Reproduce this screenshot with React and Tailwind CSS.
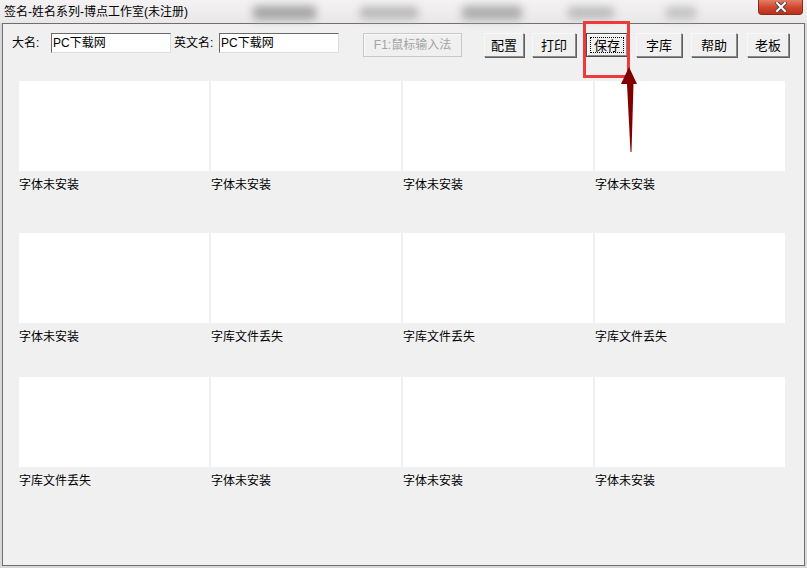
import React from "react";

const font = "font-['Liberation_Sans','Noto_Sans_CJK_SC',sans-serif]";

const rows = [
  { mt: "mt-[24px]", labels: ["字体未安装", "字体未安装", "字体未安装", "字体未安装"] },
  { mt: "mt-[40px]", labels: ["字体未安装", "字库文件丢失", "字库文件丢失", "字库文件丢失"] },
  { mt: "mt-[32px]", labels: ["字库文件丢失", "字体未安装", "字体未安装", "字体未安装"] },
];

function WinButton({ label, w, ml, focused }) {
  if (focused) {
    return (
      <div className={`${ml} ${w} h-[24px] border border-[#4a4a4a] p-0`}>
        <div className="w-full h-full border border-t-white border-l-white border-r-[#8a8a8a] border-b-[#8a8a8a] bg-[#f0f0f0] p-[2px]">
          <div className="w-full h-full border border-dotted border-black flex items-center justify-center text-[13px] leading-none text-black">
            {label}
          </div>
        </div>
      </div>
    );
  }
  return (
    <button
      className={`${ml} ${w} h-[24px] bg-[#f0f0f0] border border-t-[#f8f8f8] border-l-[#f8f8f8] border-r-[#8a8a8a] border-b-[#8a8a8a] shadow-[1px_1px_0_0_#5f5f5f] flex items-center justify-center text-[13px] leading-none text-black`}
    >
      {label}
    </button>
  );
}

export default function App() {
  return (
    <div className={`relative w-[807px] h-[568px] bg-[#d8d8d8] overflow-hidden ${font}`}>
      {/* title bar */}
      <div className="h-[23px] bg-gradient-to-b from-[#f4f2f2] to-[#e9e7e7] flex items-center">
        <div className="w-[253px] pl-[4px] text-[12px] text-black leading-none">签名-姓名系列-博点工作室(未注册)</div>
        <div className="mt-[3px] w-[63px] h-[14px] bg-[#a6a6a6] rounded blur-[4px]" />
        <div className="mt-[2px] ml-[44px] w-[58px] h-[12px] bg-[#b8b8b8] rounded blur-[4px]" />
        <div className="mt-[3px] ml-[44px] w-[60px] h-[14px] bg-[#aeaeae] rounded blur-[4px]" />
        <div className="mt-[2px] ml-[46px] w-[46px] h-[12px] bg-[#bcbcbc] rounded blur-[4px]" />
        <div className="mt-[2px] ml-[52px] w-[30px] h-[12px] bg-[#c2c2c2] rounded blur-[4px]" />
        <div className="flex-1" />
        <div className="self-start mr-[4px] w-[45px] h-[15px] rounded-b-[4px] border border-t-0 border-[#8c2a1c] bg-gradient-to-b from-[#e47d67] via-[#d2472f] to-[#b8301c] flex items-center justify-center">
          <svg width="12" height="10" viewBox="0 0 12 10">
            <path d="M2 1 L10 9 M10 1 L2 9" stroke="#4a4a4a" strokeWidth="4" strokeLinecap="square" />
            <path d="M2 1 L10 9 M10 1 L2 9" stroke="#ffffff" strokeWidth="2" strokeLinecap="square" />
          </svg>
        </div>
      </div>

      {/* window body */}
      <div className="ml-[2px] w-[803px] h-[543px] bg-[#f0f0f0] border border-[#6f6f6f] pt-[9px] text-[12px] text-black">
        {/* toolbar */}
        <div className="flex items-start pl-[9px]">
          <span className="w-[39px] h-[20px] leading-[20px]">大名:</span>
          <div className="w-[120px] h-[20px] bg-white border border-t-[#6a6a6a] border-l-[#6a6a6a] border-r-[#dcdcdc] border-b-[#dcdcdc] leading-[18px] pl-[1px]">
            PC下载网
          </div>
          <span className="ml-[3px] w-[45px] h-[20px] leading-[20px]">英文名:</span>
          <div className="w-[120px] h-[20px] bg-white border border-t-[#6a6a6a] border-l-[#6a6a6a] border-r-[#dcdcdc] border-b-[#dcdcdc] leading-[18px] pl-[1px]">
            PC下载网
          </div>
          <button className="ml-[24px] w-[99px] h-[24px] bg-[#f0f0f0] border border-[#c8c8c8] shadow-[inset_1px_1px_0_0_#fafafa] text-[12px] text-[#a3a3a3] leading-none">
            F1:鼠标输入法
          </button>
          <WinButton label="配置" w="w-[40px]" ml="ml-[22px]" />
          <WinButton label="打印" w="w-[44px]" ml="ml-[8px]" />
          <WinButton label="保存" w="w-[42px]" ml="ml-[10px]" focused />
          <WinButton label="字库" w="w-[46px]" ml="ml-[8px]" />
          <WinButton label="帮助" w="w-[46px]" ml="ml-[9px]" />
          <WinButton label="老板" w="w-[42px]" ml="ml-[10px]" />
        </div>

        {/* font preview grid */}
        {rows.map((row, ri) => (
          <div key={ri} className={`${row.mt} pl-[16px] grid grid-cols-[190px_190px_190px_190px] gap-x-[2px]`}>
            {row.labels.map((label, ci) => (
              <div key={ci}>
                <div className="h-[90px] bg-white" />
                <div className="mt-[6px] h-[16px] leading-[16px] text-[12px]">{label}</div>
              </div>
            ))}
          </div>
        ))}
      </div>

      {/* annotation: red highlight box */}
      <div className="absolute left-[583px] top-[21px] w-[47px] h-[57px] border-[3px] border-[#ee3a3a]" />
      {/* annotation: arrow */}
      <svg className="absolute left-[615px] top-[62px]" width="30" height="95" viewBox="0 0 30 95">
        <polygon points="14,5 22,22 18.5,22 16.5,90 15.5,90 12,22 6,22" fill="#800000" />
      </svg>
    </div>
  );
}
